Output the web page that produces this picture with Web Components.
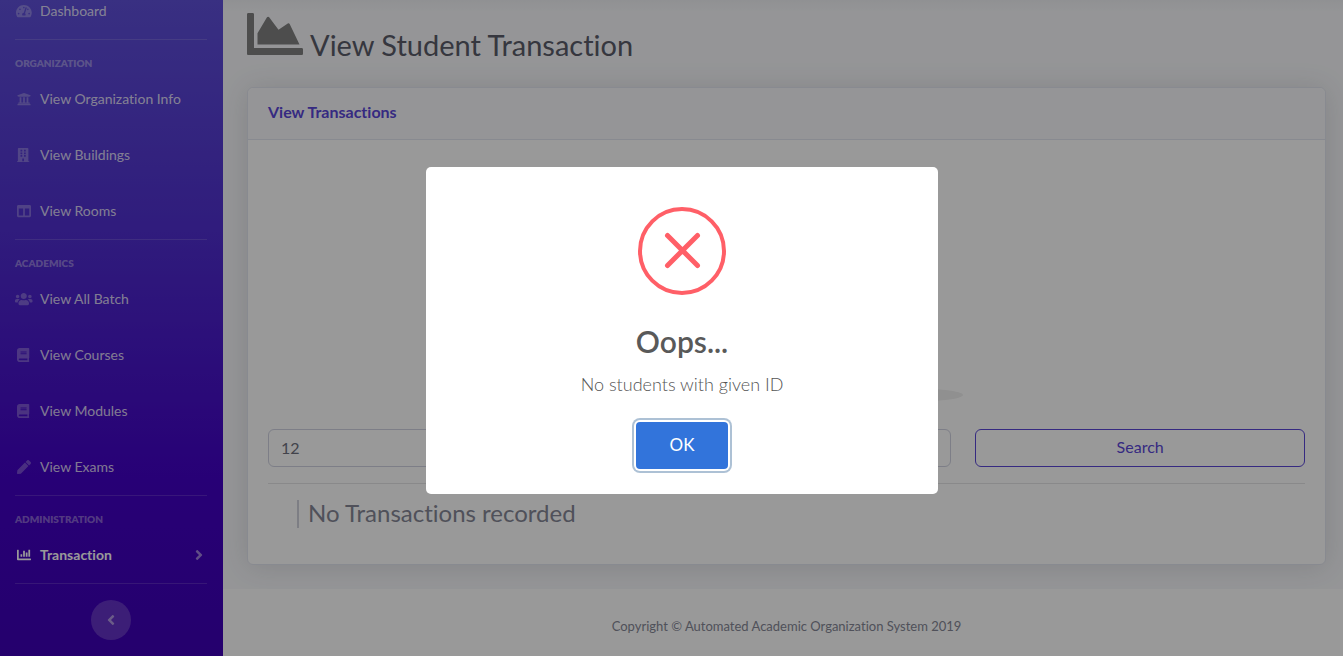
<!DOCTYPE html>
<html lang="en">
<head>
<meta charset="utf-8">
<meta name="viewport" content="width=device-width, initial-scale=1">
<title>View Student Transaction</title>
<style>
  body { margin: 0; font: 400 16px/24px Lato, "Open Sans", sans-serif; font-variant-ligatures: none; color: #858796; background: #f8f9fc; overflow: hidden; }
</style>
</head>
<body>
<admin-page></admin-page>
<script>
const FA = {
  tachometer: ['0 0 576 512', 'M288 32C128.94 32 0 160.94 0 320c0 52.8 14.25 102.26 39.06 144.8 5.61 9.62 16.3 15.2 27.44 15.2h443c11.14 0 21.83-5.58 27.44-15.2C561.75 422.26 576 372.8 576 320c0-159.06-128.94-288-288-288zm0 64c14.71 0 26.58 10.13 30.32 23.65-1.11 2.26-2.64 4.23-3.45 6.67l-9.22 27.67c-5.13 3.49-10.97 6.01-17.64 6.01-17.67 0-32-14.33-32-32S270.33 96 288 96zM96 384c-17.67 0-32-14.33-32-32s14.33-32 32-32 32 14.33 32 32-14.33 32-32 32zm48-160c-17.67 0-32-14.33-32-32s14.33-32 32-32 32 14.33 32 32-14.33 32-32 32zm246.77-72.41l-61.33 184C343.13 347.33 352 364.54 352 384c0 11.72-3.38 22.55-8.88 32H232.88c-5.5-9.45-8.88-20.28-8.88-32 0-33.94 26.5-61.43 59.9-63.59l61.34-184.01c4.17-12.56 17.73-19.45 30.36-15.17 12.57 4.19 19.35 17.79 15.17 30.36zm14.66 57.2l15.52-46.55c3.47-1.29 7.13-2.23 11.05-2.23 17.67 0 32 14.33 32 32s-14.33 32-32 32c-11.38-.01-20.89-6.28-26.57-15.22zM480 384c-17.67 0-32-14.33-32-32s14.33-32 32-32 32 14.33 32 32-14.33 32-32 32z'],
  university: ['0 0 512 512', 'M496 128v16a8 8 0 0 1-8 8h-24v12c0 6.627-5.373 12-12 12H60c-6.627 0-12-5.373-12-12v-12H24a8 8 0 0 1-8-8v-16a8 8 0 0 1 4.941-7.392l232-88a7.996 7.996 0 0 1 6.118 0l232 88A8 8 0 0 1 496 128zm-24 304H40c-13.255 0-24 10.745-24 24v16a8 8 0 0 0 8 8h464a8 8 0 0 0 8-8v-16c0-13.255-10.745-24-24-24zM96 192v192H60c-6.627 0-12 5.373-12 12v20h416v-20c0-6.627-5.373-12-12-12h-36V192h-64v192h-64V192h-64v192h-64V192H96z'],
  building: ['0 0 448 512', 'M436 480h-20V24c0-13.255-10.745-24-24-24H56C42.745 0 32 10.745 32 24v456H12c-6.627 0-12 5.373-12 12v20h448v-20c0-6.627-5.373-12-12-12zM128 76c0-6.627 5.373-12 12-12h40c6.627 0 12 5.373 12 12v40c0 6.627-5.373 12-12 12h-40c-6.627 0-12-5.373-12-12V76zm0 96c0-6.627 5.373-12 12-12h40c6.627 0 12 5.373 12 12v40c0 6.627-5.373 12-12 12h-40c-6.627 0-12-5.373-12-12v-40zm52 148h-40c-6.627 0-12-5.373-12-12v-40c0-6.627 5.373-12 12-12h40c6.627 0 12 5.373 12 12v40c0 6.627-5.373 12-12 12zm76 160h-64v-84c0-6.627 5.373-12 12-12h40c6.627 0 12 5.373 12 12v84zm64-172c0 6.627-5.373 12-12 12h-40c-6.627 0-12-5.373-12-12v-40c0-6.627 5.373-12 12-12h40c6.627 0 12 5.373 12 12v40zm0-96c0 6.627-5.373 12-12 12h-40c-6.627 0-12-5.373-12-12v-40c0-6.627 5.373-12 12-12h40c6.627 0 12 5.373 12 12v40zm0-96c0 6.627-5.373 12-12 12h-40c-6.627 0-12-5.373-12-12V76c0-6.627 5.373-12 12-12h40c6.627 0 12 5.373 12 12v40z'],
  columns: ['0 0 512 512', 'M464 32H48C21.49 32 0 53.49 0 80v352c0 26.51 21.49 48 48 48h416c26.51 0 48-21.49 48-48V80c0-26.51-21.49-48-48-48zM224 416H64V160h160v256zm224 0H288V160h160v256z'],
  users: ['0 0 640 512', 'M96 224c35.3 0 64-28.7 64-64s-28.7-64-64-64-64 28.7-64 64 28.7 64 64 64zm448 0c35.3 0 64-28.7 64-64s-28.7-64-64-64-64 28.7-64 64 28.7 64 64 64zm32 32h-64c-17.6 0-33.5 7.1-45.1 18.6 40.3 22.1 68.9 62 75.1 109.4h66c17.7 0 32-14.3 32-32v-32c0-35.3-28.7-64-64-64zm-256 0c61.9 0 112-50.1 112-112S381.9 32 320 32 208 82.1 208 144s50.1 112 112 112zm76.8 32h-8.3c-20.8 10-43.9 16-68.5 16s-47.6-6-68.5-16h-8.3C179.6 288 128 339.6 128 403.2V432c0 26.500 21.500 48 48 48h288c26.500 0 48-21.500 48-48v-28.800c0-63.600-51.600-115.200-115.200-115.200zm-223.700-13.400C161.500 263.100 145.600 256 128 256H64c-35.300 0-64 28.700-64 64v32c0 17.700 14.300 32 32 32h65.900c6.300-47.400 34.900-87.300 75.200-109.400z'],
  book: ['0 0 448 512', 'M448 360V24c0-13.300-10.700-24-24-24H96C43 0 0 43 0 96v320c0 53 43 96 96 96h328c13.300 0 24-10.700 24-24v-16c0-7.500-3.500-14.300-8.900-18.700-4.200-15.400-4.200-59.300 0-74.700 5.400-4.300 8.900-11.100 8.900-18.600zM128 134c0-3.300 2.700-6 6-6h212c3.300 0 6 2.700 6 6v20c0 3.300-2.700 6-6 6H134c-3.300 0-6-2.700-6-6v-20zm0 64c0-3.300 2.700-6 6-6h212c3.300 0 6 2.700 6 6v20c0 3.300-2.700 6-6 6H134c-3.300 0-6-2.700-6-6v-20zm253.400 250H96c-17.700 0-32-14.300-32-32 0-17.600 14.400-32 32-32h285.400c-1.900 17.100-1.900 46.900 0 64z'],
  pen: ['0 0 512 512', 'M290.740 93.240l128.020 128.020-277.990 277.990-114.140 12.600C11.350 513.540-1.560 500.620.140 485.340l12.700-114.220 277.900-277.880zm207.200-19.060l-60.110-60.110c-18.750-18.750-49.160-18.750-67.910 0l-56.550 56.550 128.020 128.020 56.550-56.550c18.750-18.760 18.750-49.160 0-67.910z'],
  chartBar: ['0 0 512 512', 'M332.800 320h38.400c6.400 0 12.800-6.400 12.800-12.800V172.800c0-6.400-6.400-12.800-12.800-12.800h-38.400c-6.400 0-12.800 6.400-12.800 12.800v134.400c0 6.400 6.400 12.800 12.800 12.800zm96 0h38.400c6.400 0 12.800-6.400 12.800-12.800V76.800c0-6.400-6.400-12.800-12.800-12.800h-38.400c-6.400 0-12.800 6.400-12.800 12.800v230.400c0 6.400 6.400 12.800 12.800 12.800zm-288 0h38.400c6.400 0 12.800-6.400 12.800-12.800v-70.400c0-6.400-6.400-12.800-12.800-12.800h-38.400c-6.400 0-12.800 6.400-12.800 12.800v70.400c0 6.400 6.400 12.800 12.800 12.800zm96 0h38.400c6.400 0 12.800-6.400 12.800-12.800V108.800c0-6.400-6.400-12.800-12.800-12.800h-38.400c-6.400 0-12.800 6.400-12.800 12.800v198.400c0 6.400 6.400 12.800 12.800 12.800zM496 384H64V80c0-8.840-7.160-16-16-16H16C7.160 64 0 71.160 0 80v336c0 17.670 14.330 32 32 32h464c8.840 0 16-7.160 16-16v-32c0-8.840-7.160-16-16-16z'],
  chartArea: ['0 0 512 512', 'M500 384c6.600 0 12 5.400 12 12v40c0 6.600-5.400 12-12 12H12c-6.600 0-12-5.400-12-12V76c0-6.600 5.400-12 12-12h40c6.600 0 12 5.400 12 12v308h436zM372.700 159.500L288 216l-85.300-113.700c-5.100-6.800-15.500-6.300-19.900 1L96 248v104h384l-89.900-187.800c-3.200-6.500-11.400-8.700-17.400-4.700z'],
  right: ['0 0 256 512', 'M224.300 273l-136 136c-9.400 9.400-24.600 9.400-33.900 0l-22.600-22.600c-9.400-9.400-9.400-24.600 0-33.900l96.400-96.400-96.400-96.400c-9.400-9.400-9.400-24.600 0-33.900L54.300 103c9.400-9.400 24.600-9.400 33.900 0l136 136c9.500 9.400 9.500 24.600.1 34z'],
  left: ['0 0 256 512', 'M31.700 239l136-136c9.400-9.400 24.600-9.400 33.900 0l22.600 22.600c9.400 9.400 9.400 24.600 0 33.900L127.900 256l96.400 96.400c9.400 9.400 9.400 24.600 0 33.900L201.700 409c-9.400 9.400-24.600 9.400-33.900 0l-136-136c-9.500-9.400-9.500-24.600-.1-34z']
};

function define(name, render) {
  customElements.define(name, class extends HTMLElement {
    connectedCallback() {
      if (this.shadowRoot) return;
      const t = document.createElement('template');
      t.innerHTML = render(this);
      this.attachShadow({ mode: 'open' }).append(t.content.cloneNode(true));
    }
  });
}

define('fa-icon', el => {
  const [box, d] = FA[el.getAttribute('name')];
  return `<style>
    :host { display: inline-flex; justify-content: center; flex: none; width: 17px; height: 14px; }
    svg { display: block; height: 100%; fill: currentColor; overflow: visible; }
  </style><svg viewBox="${box}" aria-hidden="true"><path d="${d}"/></svg>`;
});

define('nav-item', el => `<style>
    :host { display: block; }
    a { display: flex; align-items: center; gap: 8px; padding: 16px 4px 16px 0; font-size: 14px; line-height: 24px; color: rgba(255,255,255,.8); text-decoration: none; }
    fa-icon { color: rgba(255,255,255,.3); }
    span { flex: 1; white-space: nowrap; }
    :host([flush]) a { padding: 0 0 17px; line-height: 22px; }
    :host([active]) a { color: #fff; font-weight: 700; }
    :host([active]) fa-icon { color: #fff; }
    :host([active]) .more { width: 9px; height: 16px; color: rgba(255,255,255,.5); }
  </style>
  <a href="#"><fa-icon name="${el.getAttribute('icon')}"></fa-icon><span><slot></slot></span>
  ${el.hasAttribute('active') ? '<fa-icon class="more" name="right"></fa-icon>' : ''}</a>`);

define('nav-section', () => `<style>
    :host { display: block; border-top: 1px solid rgba(255,255,255,.15); padding-top: 15px; }
    h2 { margin: 0; font-size: 10px; line-height: 16px; font-weight: 800; text-transform: uppercase; color: rgba(255,255,255,.4); }
  </style><h2><slot name="title"></slot></h2><slot></slot>`);

define('side-bar', () => `<style>
    :host { display: block; box-sizing: border-box; flex: none; width: 223px; padding: 0 16px 0 15px;
      background: linear-gradient(#5f50d9 0, #502fd0 230px, #4200c5 480px, #3e00b6 656px); }
    .foot { display: flex; justify-content: center; border-top: 1px solid rgba(255,255,255,.15); padding: 16px 1px 16px 0; }
    button { display: flex; align-items: center; justify-content: center; width: 40px; height: 40px; padding: 0; border: 0; border-radius: 50%; background: rgba(255,255,255,.2); color: rgba(255,255,255,.5); }
    button fa-icon { height: 16px; }
  </style>
  <nav>
    <nav-item flush icon="tachometer">Dashboard</nav-item>
    <nav-section><span slot="title">Organization</span>
      <nav-item icon="university">View Organization Info</nav-item>
      <nav-item icon="building">View Buildings</nav-item>
      <nav-item icon="columns">View Rooms</nav-item>
    </nav-section>
    <nav-section><span slot="title">Academics</span>
      <nav-item icon="users">View All Batch</nav-item>
      <nav-item icon="book">View Courses</nav-item>
      <nav-item icon="book">View Modules</nav-item>
      <nav-item icon="pen">View Exams</nav-item>
    </nav-section>
    <nav-section><span slot="title">Administration</span>
      <nav-item active icon="chartBar">Transaction</nav-item>
    </nav-section>
  </nav>
  <div class="foot"><button type="button" aria-label="Collapse sidebar"><fa-icon name="left"></fa-icon></button></div>`);

define('page-heading', () => `<style>
    :host { display: flex; align-items: flex-end; gap: 7px; color: #5a5c69; }
    fa-icon { width: 56px; height: 56px; color: #808080; }
    h1 { margin: 0; font-size: 29px; line-height: 34px; font-weight: 400; }
  </style><fa-icon name="chartArea"></fa-icon><h1><slot></slot></h1>`);

define('data-card', () => `<style>
    :host { display: block; border: 1px solid #e3e6f0; border-radius: 6px; background: #fff; box-shadow: 0 2px 28px rgba(58,59,69,.15); }
    header { padding: 12px 20px 15px; border-bottom: 1px solid #e3e6f0; border-radius: 6px 6px 0 0; background: #f8f9fc; }
    h2 { margin: 0; font-size: 16px; line-height: 24px; font-weight: 700; color: #5a47d8; }
    .body { padding: 20px; }
  </style><header><h2><slot name="title"></slot></h2></header><div class="body"><slot></slot></div>`);

define('search-row', () => `<style>
    :host { display: block; }
    form { display: grid; grid-template-columns: calc((100% + 24px) / 3 * 2 - 24px) 1fr; gap: 24px; padding-bottom: 16px; border-bottom: 1px solid #e4e4e6; }
    input, button { box-sizing: border-box; height: 38px; margin: 0; border-radius: 6px; font: inherit; font-size: 16px; background: #fff; }
    input { width: 100%; padding: 5px 12px 7px; border: 1px solid #d1d3e2; color: #6e707e; }
    button { padding: 5px 12px 7px; border: 1px solid #5a47d8; color: #5a47d8; }
  </style><form onsubmit="return false"><input type="text" aria-label="Student ID" value="12"><button type="submit">Search</button></form>`);

define('empty-art', () => `<style>
    :host { display: flex; justify-content: center; align-items: flex-end; height: 242px; padding-bottom: 27px; }
    svg { display: block; }
  </style><svg width="353" height="14" viewBox="0 0 353 14" aria-hidden="true"><rect width="353" height="14" rx="60" ry="7" fill="#f0f0f0"/></svg>`);

define('empty-note', () => `<style>
    :host { display: block; padding: 16px 29px; }
    p { margin: 0; padding: 0 0 2px 9px; border-left: 2px solid #d1d3dc; font-size: 24px; line-height: 26px; }
  </style><p><slot></slot></p>`);

define('page-footer', () => `<style>
    :host { display: block; flex: 1; padding: 25px 0 27px 7px; background: #fff; text-align: center; font-size: 13px; line-height: 24px; }
  </style><slot></slot>`);

define('alert-box', () => `<style>
    :host { position: fixed; inset: 0; display: flex; align-items: center; justify-content: center; padding: 4px 0 0 21px; background: rgba(0,0,0,.4); }
    .box { display: flex; flex-direction: column; align-items: center; box-sizing: border-box; width: 512px; max-width: 90%; padding: 40px 20px 25px; border-radius: 5px; background: #fff; }
    svg { display: block; margin-bottom: 28px; }
    h2 { margin: 0 0 13px; font-size: 30px; line-height: 36px; font-weight: 600; color: #595959; }
    p { margin: 0 0 26px; font-size: 18px; line-height: 24px; font-weight: 300; color: #545454; }
    button { height: 47px; padding: 0 34px; border: 0; border-radius: 4px; background: #3274db; color: #fff; font: inherit; font-size: 17px; outline: 0; box-shadow: 0 0 0 2px #fff, 0 0 0 4px rgba(50,100,150,.4); }
  </style>
  <div class="box" role="dialog" aria-modal="true" aria-labelledby="t">
    <svg width="88" height="88" viewBox="0 0 88 88" fill="none" stroke="#ff5f67" aria-hidden="true"><circle cx="44" cy="44" r="42" stroke-width="4"/><path d="M29.500 28.500l30 30M59.500 28.500l-30 30" stroke-width="5" stroke-linecap="round"/></svg>
    <h2 id="t"><slot name="title"></slot></h2>
    <p><slot></slot></p>
    <button type="button">OK</button>
  </div>`);

define('admin-page', () => `<style>
    :host { display: flex; min-height: 100vh; }
    .content { flex: 1; display: flex; flex-direction: column; min-width: 0; background: linear-gradient(rgba(58,59,69,.04), rgba(58,59,69,0) 12px); }
    main { padding: 6px 17px 24px 24px; overflow: hidden; }
    page-heading { margin-bottom: 25px; }
  </style>
  <side-bar></side-bar>
  <div class="content">
    <main>
      <page-heading>View Student Transaction</page-heading>
      <data-card><span slot="title">View Transactions</span>
        <empty-art></empty-art>
        <search-row></search-row>
        <empty-note>No Transactions recorded</empty-note>
      </data-card>
    </main>
    <page-footer>Copyright © Automated Academic Organization System 2019</page-footer>
  </div>
  <alert-box><span slot="title">Oops...</span>No students with given ID</alert-box>`);
</script>
</body>
</html>
